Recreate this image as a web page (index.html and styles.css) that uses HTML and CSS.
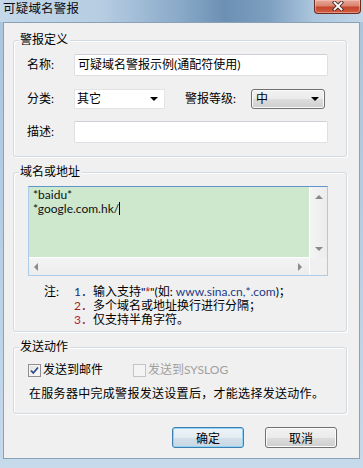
FILE: index.html
```html
<!DOCTYPE html>
<html lang="zh-CN">
<head>
    <meta charset="UTF-8">
    <meta name="viewport" content="width=device-width, initial-scale=1.0">
    <title>可疑域名警报</title>
    <link rel="stylesheet" href="styles.css">
</head>
<body>
    <div class="window">
        <!-- Barra de título -->
        <div class="titlebar">
            <span class="title">可疑域名警报</span>
            <div class="close-btn">
                <svg width="12" height="10" viewBox="0 0 12 10">
                    <path d="M2.5 1.5 L9.5 8.5 M9.5 1.5 L2.5 8.5" stroke="#4a2a24" stroke-width="3.6" stroke-linecap="square"/>
                    <path d="M2.5 1.5 L9.5 8.5 M9.5 1.5 L2.5 8.5" stroke="#ffffff" stroke-width="1.8" stroke-linecap="square"/>
                </svg>
            </div>
        </div>

        <div class="client">
            <!-- 警报定义 -->
            <div class="group group-def">
                <span class="legend">警报定义</span>
                <div class="row">
                    <span class="lbl">名称:</span>
                    <div class="textbox">可疑域名警报示例(通配符使用)</div>
                </div>
                <div class="row row-combo">
                    <span class="lbl">分类:</span>
                    <div class="combo combo-plain">
                        <span>其它</span>
                        <span class="arrow"></span>
                    </div>
                    <span class="lbl lbl-level">警报等级:</span>
                    <div class="combo combo-button">
                        <span>中</span>
                        <span class="arrow"></span>
                    </div>
                </div>
                <div class="row row-desc">
                    <span class="lbl">描述:</span>
                    <div class="textbox"></div>
                </div>
            </div>

            <!-- 域名或地址 -->
            <div class="group group-domain">
                <span class="legend">域名或地址</span>
                <div class="memo">
                    <div class="memo-text">
                        <div>*baidu*</div>
                        <div>*google.com.hk/<span class="caret"></span></div>
                    </div>
                    <div class="vscroll">
                        <span class="tri tri-up"></span>
                        <span class="tri tri-down"></span>
                    </div>
                    <div class="hscroll">
                        <span class="tri tri-left"></span>
                        <span class="tri tri-right"></span>
                    </div>
                    <div class="corner"></div>
                </div>
                <div class="notes">
                    <span class="note-head">注:</span>
                    <div class="note-lines">
                        <div><span class="num n1">1．</span>输入支持"<span class="star">*</span>"(如: <span class="url">www.sina.cn,*.com</span>)；</div>
                        <div><span class="num n2">2．</span>多个域名或地址换行进行分隔；</div>
                        <div><span class="num n3">3．</span>仅支持半角字符。</div>
                    </div>
                </div>
            </div>

            <!-- 发送动作 -->
            <div class="group group-send">
                <span class="legend">发送动作</span>
                <div class="checks">
                    <label class="chk">
                        <span class="box">
                            <svg width="11" height="11" viewBox="0 0 11 11">
                                <path d="M2 5.5 L4.3 8 L9 2.5" fill="none" stroke="#2c4c8c" stroke-width="1.8"/>
                            </svg>
                        </span>
                        发送到邮件
                    </label>
                    <label class="chk chk-disabled">
                        <span class="box"></span>
                        发送到SYSLOG
                    </label>
                </div>
                <p class="hint">在服务器中完成警报发送设置后，才能选择发送动作。</p>
            </div>

            <div class="buttons">
                <button class="btn btn-default">确定</button>
                <button class="btn">取消</button>
            </div>
        </div>
    </div>
</body>
</html>
```

FILE: styles.css
```css
body {
    margin: 0;
    padding: 0;
    font-family: "Lato", "Noto Sans CJK SC", sans-serif;
    font-size: 12px;
    color: #000;
}
.window {
    width: 363px;
    height: 468px;
    display: flex;
    flex-direction: column;
    background: linear-gradient(180deg, #a9c4dd 0%, #b9d0e6 60%, #c6daec 100%);
    box-sizing: border-box;
    overflow: hidden;
}
.titlebar {
    height: 22px;
    display: flex;
    align-items: flex-start;
    background: linear-gradient(90deg, #c4d8ea 0%, #b6cde2 28%, #88a9c8 50%, #6c90b3 62%, #7d9fc0 74%, #aac5dd 86%, #c2d6e8 100%);
}
.title {
    padding-left: 3px;
    margin-top: 1px;
    line-height: 15px;
    font-size: 12.5px;
    letter-spacing: 0.2px;
    color: #0c0c0c;
}
.close-btn {
    margin-left: auto;
    margin-right: 2px;
    width: 47px;
    height: 14px;
    box-sizing: border-box;
    border: 1px solid #6a2b20;
    border-top: none;
    border-radius: 0 0 4px 4px;
    background: linear-gradient(180deg, #e8a899 0%, #d98470 45%, #c4452c 55%, #d35e43 100%);
    box-shadow: inset 0 0 0 1px rgba(255,210,200,0.45);
    display: flex;
    align-items: center;
    justify-content: center;
}
.close-btn svg {
    display: block;
    margin-top: -1px;
}
.client {
    margin: 0 3px;
    height: 437px;
    box-sizing: border-box;
    border: 1px solid #8ba1b6;
    background: #f0f0f0;
    display: flex;
    flex-direction: column;
}

/* caixas de grupo */
.group {
    position: relative;
    width: 334px;
    margin-left: 9px;
    box-sizing: border-box;
    border: 1px solid #d3dbe1;
    border-radius: 3px;
    box-shadow: inset 1px 1px 0 #fff, 1px 1px 0 #fff;
}
.legend {
    position: absolute;
    top: -8px;
    left: 5px;
    padding: 0 2px 0 1px;
    background: #f0f0f0;
    line-height: 14px;
}
.group-def {
    margin-top: 17px;
    padding: 13px 0 13px 13px;
}
.group-domain {
    margin-top: 15px;
    padding: 13px 0 4px 14px;
}
.group-send {
    margin-top: 15px;
    padding: 15px 0 12px 14px;
}

.row {
    display: flex;
    align-items: center;
}
.row-combo {
    margin-top: 13px;
}
.row-desc {
    margin-top: 12px;
}
.lbl {
    width: 47px;
    line-height: 14px;
}
.lbl-level {
    width: 66px;
    margin-left: 20px;
}
.textbox {
    width: 254px;
    height: 22px;
    box-sizing: border-box;
    background: #fff;
    border: 1px solid #dcdfe4;
    border-top-color: #cdd1d7;
    border-radius: 2px;
    padding-left: 3px;
    line-height: 20px;
}
.combo {
    height: 20px;
    box-sizing: border-box;
    display: flex;
    align-items: center;
    justify-content: space-between;
    line-height: 18px;
}
.combo-plain {
    width: 91px;
    background: #fff;
    border: 1px solid #e2e4e8;
    padding: 0 6px 0 2px;
}
.combo-button {
    width: 74px;
    border: 1px solid #707070;
    border-radius: 3px;
    background: linear-gradient(180deg, #f2f2f2 0%, #ebebeb 50%, #dddddd 51%, #cfcfcf 100%);
    box-shadow: inset 0 0 0 1px #fbfbfb;
    padding: 0 5px 0 4px;
}
.arrow {
    width: 0;
    height: 0;
    border-left: 4px solid transparent;
    border-right: 4px solid transparent;
    border-top: 4px solid #000;
}

/* área de texto */
.memo {
    width: 300px;
    height: 90px;
    box-sizing: border-box;
    border: 1px solid #abcbe9;
    border-top-color: #5f95c9;
    display: grid;
    grid-template-columns: 1fr 17px;
    grid-template-rows: 1fr 17px;
    background: #f3f3f3;
}
.memo-text {
    background: #cde8cd;
    padding: 1px 4px;
    line-height: 14px;
    font-size: 12px;
    color: #111;
    border-right: 1px solid #fff;
    border-bottom: 1px solid #fff;
}
.caret {
    display: inline-block;
    width: 1px;
    height: 13px;
    background: #000;
    vertical-align: -2px;
}
.vscroll {
    display: flex;
    flex-direction: column;
    align-items: center;
    justify-content: space-between;
    padding: 8px 0 7px;
    background: linear-gradient(90deg, #f4f4f4, #ececec);
}
.hscroll {
    display: flex;
    align-items: center;
    justify-content: space-between;
    padding: 0 7px 0 5px;
    background: linear-gradient(180deg, #f4f4f4, #ececec);
    border-right: 1px solid #fff;
}
.corner {
    background: #f0f0f0;
}
.tri {
    width: 0;
    height: 0;
}
.tri-up {
    border-left: 4px solid transparent;
    border-right: 4px solid transparent;
    border-bottom: 4px solid #8a8a8a;
}
.tri-down {
    border-left: 4px solid transparent;
    border-right: 4px solid transparent;
    border-top: 4px solid #8a8a8a;
}
.tri-left {
    border-top: 4px solid transparent;
    border-bottom: 4px solid transparent;
    border-right: 4px solid #8a8a8a;
}
.tri-right {
    border-top: 4px solid transparent;
    border-bottom: 4px solid transparent;
    border-left: 4px solid #8a8a8a;
}

/* observações */
.notes {
    display: flex;
    margin-top: 9px;
    padding-left: 16px;
    line-height: 14px;
}
.note-head {
    width: 30px;
}
.n1 {
    color: #1d2f7a;
}
.n2 {
    color: #9a2424;
}
.n3 {
    color: #b0223a;
}
.star {
    color: #d01010;
    font-family: "Liberation Sans", sans-serif;
}
.url {
    color: #233a86;
}

/* envio */
.checks {
    display: flex;
    align-items: center;
}
.chk {
    display: flex;
    align-items: center;
    gap: 2px;
    line-height: 14px;
}
.chk + .chk {
    margin-left: 30px;
}
.box {
    width: 13px;
    height: 13px;
    box-sizing: border-box;
    border: 1px solid #8f8f8f;
    background: linear-gradient(135deg, #dcdcdc 0%, #f6f6f6 70%, #ffffff 100%);
    box-shadow: inset 0 0 0 1px #f4f4f4;
    display: flex;
    align-items: center;
    justify-content: center;
}
.box svg {
    display: block;
}
.chk-disabled {
    color: #a0a0a0;
}
.chk-disabled .box {
    border-color: #c4c4c4;
    background: #f4f4f4;
    box-shadow: none;
}
.hint {
    margin: 10px 0 0 1px;
    line-height: 14px;
    letter-spacing: 0.3px;
}

/* botões */
.buttons {
    display: flex;
    justify-content: flex-end;
    gap: 21px;
    margin-top: 13px;
    padding-right: 22px;
}
.btn {
    width: 72px;
    height: 21px;
    padding: 0;
    box-sizing: border-box;
    font-family: "Lato", "Noto Sans CJK SC", sans-serif;
    font-size: 12px;
    color: #000;
    border: 1px solid #707070;
    border-radius: 3px;
    background: linear-gradient(180deg, #f2f2f2 0%, #ebebeb 50%, #dddddd 51%, #cfcfcf 100%);
    box-shadow: inset 0 0 0 1px #fcfcfc;
}
.btn-default {
    border-color: #3c7fb1;
    background: linear-gradient(180deg, #eef4f8 0%, #e3ecf2 50%, #d3e0ea 51%, #c9d8e4 100%);
    box-shadow: inset 0 0 0 1px #8fd3f6;
}
```
